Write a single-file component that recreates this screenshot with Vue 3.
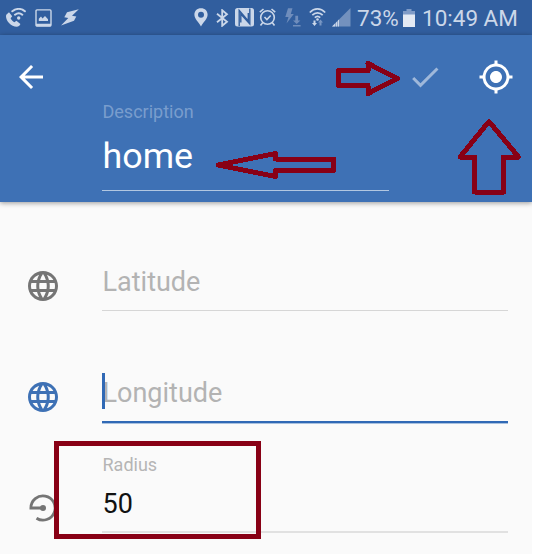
<script setup>
const globe = 'M11.99 2C6.47 2 2 6.48 2 12s4.47 10 9.99 10C17.52 22 22 17.52 22 12S17.52 2 11.99 2zm6.93 6h-2.95c-.32-1.25-.78-2.45-1.38-3.56 1.84.63 3.37 1.91 4.33 3.56zM12 4.04c.83 1.2 1.48 2.53 1.91 3.96h-3.82c.43-1.43 1.08-2.76 1.91-3.96zM4.26 14C4.1 13.36 4 12.69 4 12s.1-1.36.26-2h3.38c-.08.66-.14 1.32-.14 2s.06 1.34.14 2H4.26zm.82 2h2.95c.32 1.25.78 2.45 1.38 3.56-1.84-.63-3.37-1.9-4.33-3.56zm2.95-8H5.08c.96-1.66 2.49-2.93 4.33-3.56C8.81 5.55 8.35 6.75 8.03 8zM12 19.96c-.83-1.2-1.48-2.53-1.91-3.96h3.82c-.43 1.43-1.08 2.76-1.91 3.96zM14.34 14H9.66c-.09-.66-.16-1.32-.16-2s.07-1.35.16-2h4.68c.09.65.16 1.32.16 2s-.07 1.34-.16 2zm.25 5.56c.6-1.11 1.06-2.31 1.38-3.56h2.95c-.96 1.65-2.49 2.93-4.33 3.56zM16.36 14c.08-.66.14-1.32.14-2s-.06-1.34-.14-2h3.38c.16.64.26 1.31.26 2s-.1 1.36-.26 2h-3.38z'
</script>

<template>
  <div class="page">
    <main class="screen">
      <div class="status">
        <svg class="call" width="22" height="20" viewBox="0 0 22 20">
          <path fill="currentColor" d="M1.500 6.500 4 4.200l3.200 4-1.600 2c.8 1.700 2 3 3.800 4l2-1.500 4 3.200c-.7 1.700-2 2.800-3.600 2.800C6.200 18.600 1 13 1 8.200 1 7.600 1.200 7 1.500 6.500z" />
          <g fill="none" stroke="currentColor" stroke-width="2" stroke-linecap="round"><path d="M7.300 3.300c4-3.200 9-3.200 12.600 0M10 6.700c2.500-2 5-2 7.300 0" /></g>
          <circle cx="13.700" cy="10" r="1.700" fill="currentColor" />
        </svg>
        <svg class="image" width="17" height="18" viewBox="0 0 17 18">
          <path fill="none" stroke="currentColor" stroke-width="1.400" d="M2 .9h13q1 0 1 1V16q0 1-1 1H2q-1 0-1-1V1.900q0-1 1-1z" />
          <path fill="currentColor" d="M1 14.800h15v2.500H1zM3.800 12V9.800L6 7.600l1.500 1.800L10 7l3 3.300V12z" />
        </svg>
        <svg class="flash" width="18" height="17" viewBox="0 0 18 17"><path fill="currentColor" d="M17.800.2 6 3.300 3.300 8.300l4 .7L0 16.500l13-4.700 2.300-4.300-4.300-.7z" /></svg>

        <svg class="pin" width="14" height="20" viewBox="0 0 14 20"><path fill="currentColor" fill-rule="evenodd" d="M7 .3C3 .3.400 3 .400 6.800.400 11 5 14.500 7 18.500c2-4 6.600-7.500 6.600-11.700C13.600 3 11 .3 7 .3zm0 3.500a3 3 0 1 1 0 6 3 3 0 0 1 0-6z" /></svg>
        <svg class="bt" width="13" height="18" viewBox="0 0 13 18"><path fill="none" stroke="currentColor" stroke-width="1.800" d="m1 4.800 10 8L6.200 16.800V1.200L11 5.200l-10 8" /></svg>
        <svg class="nfc" width="19" height="19" viewBox="0 0 19 19">
          <rect width="19" height="18.500" rx="2.500" fill="currentColor" />
          <path fill="none" stroke="#315e9e" stroke-width="1.400" d="M4.200 18V2.500L13.300 13V5M14.800 .5V16L5.800 6v8.500" />
        </svg>
        <svg class="alarm" width="17" height="19" viewBox="0 0 17 19">
          <g fill="none" stroke="currentColor" stroke-width="1.600"><circle cx="8.500" cy="9.500" r="6.800" /><path d="M.8 4.200 4.500 1M12.500 1l3.700 3.200M3.800 14.500 1.500 17.600M13.200 14.500l2.300 3.100M5.500 9l2.400 2.500 3.800-4" /></g>
        </svg>
        <svg class="download" width="16" height="19" viewBox="0 0 16 19"><path fill="currentColor" d="M3 .3h4.500L5.800 6h3L1.500 15.500 3.500 9H.3zM10.300 7.800h2.800v4.600h2.300l-3.700 3.700L8 12.400h2.300zM8 17h7.600v1.500H8z" /></svg>
        <svg class="wifi" width="17" height="19" viewBox="0 0 17 19">
          <g fill="none" stroke="currentColor" stroke-width="1.700"><path d="M.8 4.500c4.500-4.800 10.800-4.800 15.400 0M3.300 7.200c3-3.200 7.400-3.200 10.400 0M5.800 9.700c1.600-1.500 3.800-1.500 5.400 0" /></g>
          <circle cx="8.500" cy="11.500" r="1.300" fill="currentColor" />
          <path fill="currentColor" d="M4.500 12.500h2V15H8l-2.500 3L3 15h1.500z" /><path fill="#7896c3" d="M10.500 17.500h2v-3H14l-2.500-3-2.500 3h1.500z" />
        </svg>
        <svg class="signal" width="19" height="19" viewBox="0 0 19 19"><path fill="#7391be" d="M18.500 0v18.500H0z" /><path fill="currentColor" d="M0 18.500 3 15.500v3zM3.700 15l1.500-1.700v5.200H3.700zM5.900 12.500 7 11.500v7H5.900z" /></svg>
        <span class="percent">73%</span>
        <svg class="battery" width="12" height="18" viewBox="0 0 12 18"><path fill="#7f9bc7" d="M0 2h3.500V0h5v2H12v4H0z" /><path fill="#e3e9f3" d="M0 5.500h12V18H0z" /></svg>
        <span class="clock">10:49 AM</span>
      </div>

      <header class="header">
        <div class="toolbar">
          <svg class="icon" viewBox="0 0 24 24"><path d="M20 11H7.830l5.590-5.590L12 4l-8 8 8 8 1.410-1.410L7.830 13H20v-2z" /></svg>
          <svg class="icon check" viewBox="0 0 24 24"><path d="M9 16.170 4.830 12l-1.420 1.410L9 19 21 7l-1.410-1.410z" /></svg>
          <svg class="icon" viewBox="0 0 24 24"><path d="M12 8c-2.210 0-4 1.790-4 4s1.790 4 4 4 4-1.790 4-4-1.790-4-4-4zm8.940 3A8.994 8.994 0 0 0 13 3.060V1h-2v2.060A8.994 8.994 0 0 0 3.060 11H1v2h2.060A8.994 8.994 0 0 0 11 20.940V23h2v-2.060A8.994 8.994 0 0 0 20.940 13H23v-2h-2.060zM12 19c-3.870 0-7-3.130-7-7s3.130-7 7-7 7 3.130 7 7-3.130 7-7 7z" /></svg>
        </div>
        <div class="description">
          <div class="label">Description</div>
          <div class="name">home</div>
        </div>
      </header>

      <section class="form">
        <div class="row">
          <svg class="icon" viewBox="0 0 24 24"><path :d="globe" /></svg>
          <div class="field">Latitude</div>
        </div>
        <div class="row active">
          <svg class="icon" viewBox="0 0 24 24"><path :d="globe" /></svg>
          <div class="field"><i class="caret"></i>Longitude</div>
        </div>
        <div class="row radius">
          <svg class="icon" viewBox="0 0 36 36"><path fill="none" stroke="currentColor" stroke-width="2.800" d="M18 18H5.900A12.100 12.100 0 1 1 11.500 28.200" /><circle cx="18" cy="18" r="3" /></svg>
          <div class="field"><div class="label">Radius</div><div class="value">50</div></div>
        </div>
      </section>

      <svg class="marks" width="532" height="554" viewBox="0 0 532 554" shape-rendering="crispEdges">
        <path d="M338.500 70.500h29.500v-7L397.500 78.500 368 93.500v-8h-29.500z" />
        <path d="M218 165 275.500 153.500v5.500h58v11.500h-58v6z" />
        <path d="M489 121.500 518.500 157h-15v35h-29v-35h-14.500z" />
        <path class="box" d="M56.500 443.500h202v93h-202z" />
      </svg>
    </main>
  </div>
</template>

<style>
body { margin: 0; background: #fff; }
</style>

<style scoped>
.page { width: 536px; height: 554px; overflow: hidden; font-family: Roboto, sans-serif; }
.screen { position: relative; width: 532px; height: 554px; background: #fafafa; overflow: hidden; }
.status { display: flex; align-items: flex-start; height: 35px; box-sizing: border-box; padding-top: 8px; background: #315e9e; color: #cbd7e9; }
.status svg { flex: none; }
.call { margin-left: 5px; }
.image { margin: 1px 0 0 8px; }
.flash { margin: 1px 0 0 9px; }
.pin { margin-left: 115px; }
.bt { margin: 1px 0 0 8px; }
.nfc { margin-left: 6px; }
.alarm { margin-left: 5px; }
.download { margin-left: 9px; }
.status .download { color: #6f8dbc; }
.wifi { margin-left: 8px; }
.signal { margin-left: 6px; }
.percent, .clock { white-space: nowrap; font-size: 22.500px; line-height: 28px; margin-top: -4px; }
.percent { width: 41px; margin-left: 6px; }
.battery { margin: 1px 0 0 5px; }
.clock { margin-left: 7px; }
.header { height: 167px; box-sizing: border-box; padding-top: 23.500px; background: #3e71b5; color: #fff; box-shadow: 0 1px 5px rgba(0, 0, 0, .4); }
.toolbar { display: flex; align-items: center; height: 36px; padding: 0 18px 0 13px; margin-bottom: 7.500px; }
.icon { flex: none; width: 36px; height: 36px; fill: currentColor; }
.check { margin-left: auto; margin-right: 35px; opacity: .5; }
.description { width: 287px; height: 88px; margin-left: 102px; border-bottom: 1px solid #b2c7e1; text-indent: .5px; }
.label { font-size: 18px; line-height: 20px; color: #b5b5b5; }
.description .label { color: #799dcd; }
.name { font-size: 35.800px; line-height: 42px; margin-top: 13px; }
.form { padding: 58px 24px 0 25px; }
.row { display: flex; align-items: flex-start; color: #757575; height: 111px; }
.row .icon { margin-top: 8px; }
.radius .icon { margin-top: 7.500px; }
.field { position: relative; width: 406px; height: 50px; margin-left: 41px; border-bottom: 1px solid #d6d6d6; font-size: 27px; line-height: 45px; color: #b3b3b3; text-indent: .5px; }
.active { color: #3e71b5; }
.active .field { height: 50px; border-bottom: 2px solid #3069b5; box-shadow: 0 1px #a9c1df; }
.caret { position: absolute; left: 0; top: 2px; width: 3px; height: 36px; background: #3069b5; }
.radius .field { height: 49px; border-bottom: 2px solid #e1e1e1; }
.radius .label { margin-top: -27px; line-height: 20px; }
.value { color: #111; line-height: 43px; margin-top: 8px; }
.marks { position: absolute; left: 0; top: 0; fill: none; stroke: #880015; stroke-width: 5; stroke-linejoin: round; }
.box { stroke-linejoin: miter; }
</style>
